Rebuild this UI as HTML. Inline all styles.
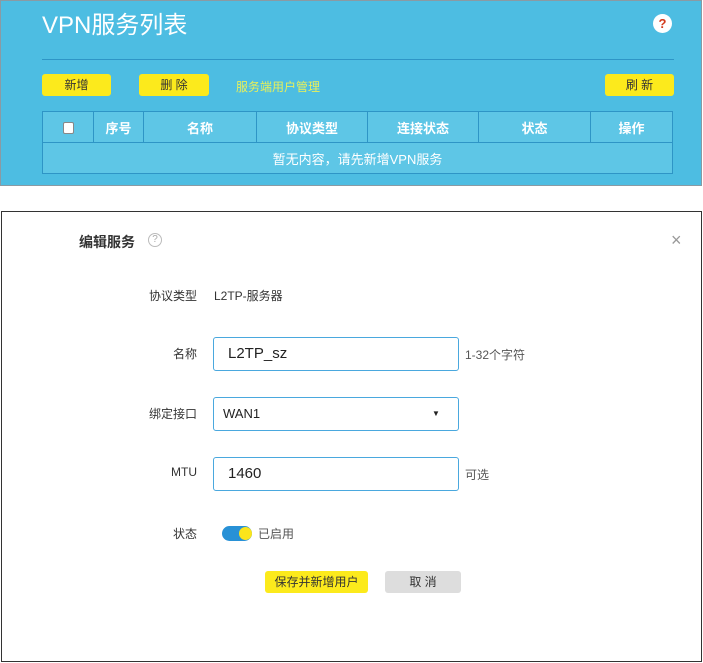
<!DOCTYPE html><html><head><meta charset="utf-8"><style>
*{margin:0;padding:0;box-sizing:border-box}
body{width:703px;height:663px;background:#fff;position:relative;font-family:"Liberation Sans","Noto Sans CJK SC",sans-serif;overflow:hidden}
.a{position:absolute}
#top{left:0;top:0;width:702px;height:186px;background:#4dbde2;border:1px solid #8a9aa3}
.btn{position:absolute;background:#fcea1c;border-radius:3px;font-size:12px;color:#333;text-align:center;line-height:22px;height:22px}
table{position:absolute;left:42px;top:111px;width:631px;border-collapse:collapse;font-size:13px;color:#fff;font-weight:bold}
td{border:1px solid #2e95c6;text-align:center;height:31px;background:#5ec6e6}
#bot{left:1px;top:211px;width:701px;height:451px;border:1px solid #333}
.lbl{position:absolute;font-size:12px;color:#333;text-align:right;width:80px;left:117px}
.inp{position:absolute;left:213px;width:246px;height:34px;border:1px solid #4aa8de;border-radius:3px;font-size:15px;color:#222;padding-left:14px;line-height:32px}
</style></head><body>
<div id="top" class="a">
<div class="a" style="left:41px;top:4px;font-size:24px;color:#fff">VPN服务列表</div>
<div class="a" style="left:652px;top:13px;width:19px;height:19px;border-radius:50%;background:#fff;color:#d2391c;font-size:13px;font-weight:bold;text-align:center;line-height:19px">?</div>
<div class="a" style="left:41px;top:58px;width:632px;height:1px;background:#2e95c6"></div>
<div class="btn" style="left:41px;top:73px;width:69px">新增</div>
<div class="btn" style="left:138px;top:73px;width:70px">删 除</div>
<div class="a" style="left:235px;top:77px;font-size:12px;color:#e8f05a">服务端用户管理</div>
<div class="btn" style="left:604px;top:73px;width:69px">刷 新</div>
</div>
<table><tr><td style="width:51px"><span style="display:inline-block;width:11px;height:12px;background:#fff;border:1px solid #888;border-radius:2px;vertical-align:middle"></span></td><td style="width:50px">序号</td><td style="width:113px">名称</td><td style="width:111px">协议类型</td><td style="width:111px">连接状态</td><td style="width:112px">状态</td><td>操作</td></tr>
<tr><td colspan="7" style="font-weight:normal">暂无内容，请先新增VPN服务</td></tr></table>
<div id="bot" class="a">
<div class="a" style="left:77px;top:20px;font-size:14px;font-weight:bold;color:#333">编辑服务</div>
<div class="a" style="left:146px;top:21px;width:14px;height:14px;border-radius:50%;border:1px solid #bbb;color:#aaa;font-size:10px;text-align:center;line-height:12px">?</div>
<div class="a" style="left:669px;top:18px;font-size:18px;color:#999">×</div>
</div>
<div class="lbl" style="top:287px">协议类型</div>
<div class="a" style="left:214px;top:287px;font-size:12px;color:#333">L2TP-服务器</div>
<div class="lbl" style="top:345px">名称</div>
<div class="inp" style="top:337px">L2TP_sz</div>
<div class="a" style="left:465px;top:346px;font-size:12px;color:#555">1-32个字符</div>
<div class="lbl" style="top:405px">绑定接口</div>
<div class="inp" style="top:397px;font-size:13px;padding-left:9px">WAN1<span style="position:absolute;left:218px;font-size:8px">▼</span></div>
<div class="lbl" style="top:465px">MTU</div>
<div class="inp" style="top:457px">1460</div>
<div class="a" style="left:465px;top:466px;font-size:12px;color:#555">可选</div>
<div class="lbl" style="top:525px">状态</div>
<div class="a" style="left:222px;top:526px;width:30px;height:15px;border-radius:8px;background:#2891d6"></div>
<div class="a" style="left:239px;top:527px;width:13px;height:13px;border-radius:50%;background:#fbe51c"></div>
<div class="a" style="left:258px;top:525px;font-size:12px;color:#555">已启用</div>
<div class="btn" style="left:265px;top:571px;width:103px;height:22px;font-size:12px">保存并新增用户</div>
<div class="btn" style="left:385px;top:571px;width:76px;background:#ddd">取 消</div>
</body></html>
